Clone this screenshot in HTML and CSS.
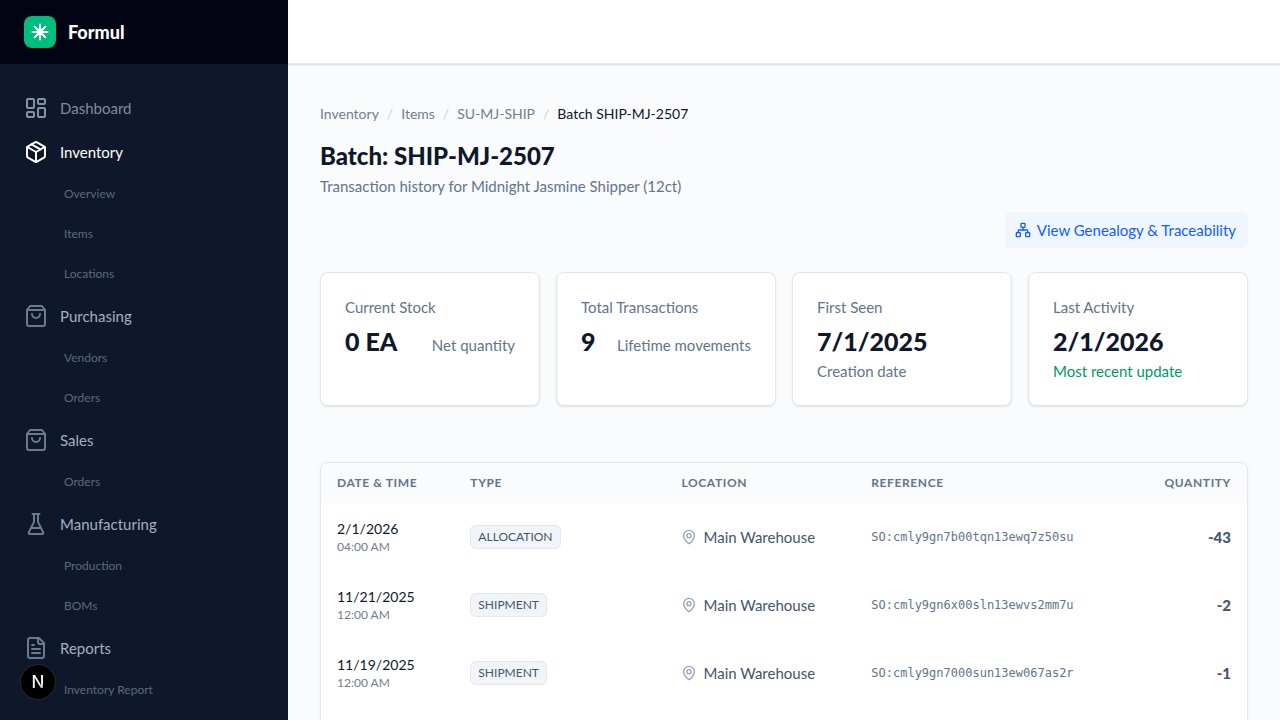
FILE: index.html
```html
<!DOCTYPE html>
<html lang="en">
<head>
    <meta charset="UTF-8">
    <meta name="viewport" content="width=device-width, initial-scale=1.0">
    <title>Batch SHIP-MJ-2507 - Formul</title>
    <link rel="stylesheet" href="styles.css">
</head>
<body>
    <!-- shared icons -->
    <svg class="sprite" aria-hidden="true">
        <symbol id="icon-bag" viewBox="0 0 24 24">
            <path d="M6 2 3 6v14a2 2 0 0 0 2 2h14a2 2 0 0 0 2-2V6l-3-4Z"/>
            <path d="M3 6h18"/>
            <path d="M16 10a4 4 0 0 1-8 0"/>
        </symbol>
        <symbol id="icon-pin" viewBox="0 0 24 24">
            <path d="M20 10c0 4.993-5.539 10.193-7.399 11.799a1 1 0 0 1-1.202 0C9.539 20.193 4 14.993 4 10a8 8 0 0 1 16 0"/>
            <circle cx="12" cy="10" r="3"/>
        </symbol>
    </svg>

    <div class="app">
        <aside class="sidebar">
            <div class="brand">
                <span class="brand-logo">
                    <svg viewBox="0 0 32 32">
                        <path d="M16 8.5v15M8.5 16h15M10.7 10.7l10.6 10.6M21.3 10.7L10.7 21.3"/>
                    </svg>
                </span>
                <span class="brand-name">Formul</span>
            </div>

            <nav class="nav">
                <a class="nav-item muted" href="#">
                    <svg class="icon" viewBox="0 0 24 24">
                        <rect width="7" height="9" x="3" y="3" rx="1"/>
                        <rect width="7" height="5" x="14" y="3" rx="1"/>
                        <rect width="7" height="9" x="14" y="12" rx="1"/>
                        <rect width="7" height="5" x="3" y="16" rx="1"/>
                    </svg>
                    Dashboard
                </a>

                <a class="nav-item active" href="#">
                    <svg class="icon" viewBox="0 0 24 24">
                        <path d="M11 21.73a2 2 0 0 0 2 0l7-4A2 2 0 0 0 21 16V8a2 2 0 0 0-1-1.73l-7-4a2 2 0 0 0-2 0l-7 4A2 2 0 0 0 3 8v8a2 2 0 0 0 1 1.73z"/>
                        <path d="M12 22V12"/>
                        <path d="m3.3 7 8.7 5 8.7-5"/>
                        <path d="m7.5 4.27 9 5.15"/>
                    </svg>
                    Inventory
                </a>
                <a class="nav-sub" href="#">Overview</a>
                <a class="nav-sub" href="#">Items</a>
                <a class="nav-sub" href="#">Locations</a>

                <a class="nav-item" href="#">
                    <svg class="icon"><use href="#icon-bag"/></svg>
                    Purchasing
                </a>
                <a class="nav-sub" href="#">Vendors</a>
                <a class="nav-sub" href="#">Orders</a>

                <a class="nav-item" href="#">
                    <svg class="icon"><use href="#icon-bag"/></svg>
                    Sales
                </a>
                <a class="nav-sub" href="#">Orders</a>

                <a class="nav-item" href="#">
                    <svg class="icon" viewBox="0 0 24 24">
                        <path d="M10 2v7.527a2 2 0 0 1-.211.896L4.72 20.55a1 1 0 0 0 .9 1.45h12.76a1 1 0 0 0 .9-1.45l-5.069-10.127A2 2 0 0 1 14 9.527V2"/>
                        <path d="M8.5 2h7"/>
                        <path d="M7 16h10"/>
                    </svg>
                    Manufacturing
                </a>
                <a class="nav-sub" href="#">Production</a>
                <a class="nav-sub" href="#">BOMs</a>

                <a class="nav-item" href="#">
                    <svg class="icon" viewBox="0 0 24 24">
                        <path d="M15 2H6a2 2 0 0 0-2 2v16a2 2 0 0 0 2 2h12a2 2 0 0 0 2-2V7Z"/>
                        <path d="M14 2v4a2 2 0 0 0 2 2h4"/>
                        <path d="M10 9H8"/>
                        <path d="M16 13H8"/>
                        <path d="M16 17H8"/>
                    </svg>
                    Reports
                </a>
                <a class="nav-sub" href="#">Inventory Report</a>
            </nav>
        </aside>

        <div class="page">
            <header class="topbar"></header>

            <main class="content">
                <nav class="breadcrumb" aria-label="Breadcrumb">
                    <a href="#">Inventory</a>
                    <span class="sep">/</span>
                    <a href="#">Items</a>
                    <span class="sep">/</span>
                    <a href="#">SU-MJ-SHIP</a>
                    <span class="sep">/</span>
                    <span class="current">Batch SHIP-MJ-2507</span>
                </nav>

                <h1>Batch: SHIP-MJ-2507</h1>
                <p class="subtitle">Transaction history for Midnight Jasmine Shipper (12ct)</p>

                <div class="actions">
                    <a class="trace-link" href="#">
                        <svg class="icon small" viewBox="0 0 24 24">
                            <rect x="16" y="16" width="6" height="6" rx="1"/>
                            <rect x="2" y="16" width="6" height="6" rx="1"/>
                            <rect x="9" y="2" width="6" height="6" rx="1"/>
                            <path d="M5 16v-3a1 1 0 0 1 1-1h12a1 1 0 0 1 1 1v3"/>
                            <path d="M12 12V8"/>
                        </svg>
                        View Genealogy &amp; Traceability
                    </a>
                </div>

                <section class="stats">
                    <div class="stat">
                        <div class="stat-label">Current Stock</div>
                        <div class="stat-body">
                            <span class="stat-value">0 EA</span>
                            <span class="stat-note">Net quantity</span>
                        </div>
                    </div>
                    <div class="stat">
                        <div class="stat-label">Total Transactions</div>
                        <div class="stat-body">
                            <span class="stat-value">9</span>
                            <span class="stat-note">Lifetime movements</span>
                        </div>
                    </div>
                    <div class="stat">
                        <div class="stat-label">First Seen</div>
                        <div class="stat-body">
                            <span class="stat-value">7/1/2025</span>
                            <span class="stat-note">Creation date</span>
                        </div>
                    </div>
                    <div class="stat">
                        <div class="stat-label">Last Activity</div>
                        <div class="stat-body">
                            <span class="stat-value">2/1/2026</span>
                            <span class="stat-note positive">Most recent update</span>
                        </div>
                    </div>
                </section>

                <section class="table-card">
                    <table>
                        <thead>
                            <tr>
                                <th class="col-date">Date &amp; Time</th>
                                <th class="col-type">Type</th>
                                <th class="col-location">Location</th>
                                <th>Reference</th>
                                <th class="col-qty">Quantity</th>
                            </tr>
                        </thead>
                        <tbody>
                            <tr>
                                <td><div class="date">2/1/2026</div><div class="time">04:00 AM</div></td>
                                <td><span class="badge">ALLOCATION</span></td>
                                <td><div class="location"><svg class="icon small"><use href="#icon-pin"/></svg>Main Warehouse</div></td>
                                <td class="reference">SO:cmly9gn7b00tqn13ewq7z50su</td>
                                <td class="quantity">-43</td>
                            </tr>
                            <tr>
                                <td><div class="date">11/21/2025</div><div class="time">12:00 AM</div></td>
                                <td><span class="badge">SHIPMENT</span></td>
                                <td><div class="location"><svg class="icon small"><use href="#icon-pin"/></svg>Main Warehouse</div></td>
                                <td class="reference">SO:cmly9gn6x00sln13ewvs2mm7u</td>
                                <td class="quantity">-2</td>
                            </tr>
                            <tr>
                                <td><div class="date">11/19/2025</div><div class="time">12:00 AM</div></td>
                                <td><span class="badge">SHIPMENT</span></td>
                                <td><div class="location"><svg class="icon small"><use href="#icon-pin"/></svg>Main Warehouse</div></td>
                                <td class="reference">SO:cmly9gn7000sun13ew067as2r</td>
                                <td class="quantity">-1</td>
                            </tr>
                        </tbody>
                    </table>
                </section>
            </main>
        </div>
    </div>

    <button class="dev-badge" type="button"><span>N</span></button>
</body>
</html>
```
FILE: styles.css
```css
* {
    box-sizing: border-box;
}

body {
    margin: 0;
    font-family: Lato, sans-serif;
    font-size: 15px;
    line-height: 20px;
    color: #0f172b;
    background-color: #f9fbfd;
}

a {
    color: inherit;
    text-decoration: none;
}

.sprite {
    display: none;
}

.icon {
    width: 24px;
    height: 24px;
    flex-shrink: 0;
    fill: none;
    stroke: currentColor;
    stroke-width: 2;
    stroke-linecap: round;
    stroke-linejoin: round;
}

.icon.small {
    width: 16px;
    height: 16px;
}

.app {
    display: flex;
    height: 100vh;
}

/* Sidebar */
.sidebar {
    width: 288px;
    flex-shrink: 0;
    overflow: hidden;
    background-color: #0f172a;
}

.brand {
    display: flex;
    align-items: center;
    gap: 12px;
    height: 64px;
    padding: 0 24px;
    background-color: #020414;
}

.brand-logo {
    width: 32px;
    height: 32px;
    border-radius: 8px;
    background-color: #00bc7d;
}

.brand-logo svg {
    display: block;
    fill: none;
    stroke: #fff;
    stroke-width: 2;
    stroke-linecap: round;
}

.brand-name {
    font-size: 18px;
    font-weight: 900;
    color: #fff;
}

.nav {
    padding: 22px 24px;
}

.nav-item {
    display: flex;
    align-items: center;
    gap: 12px;
    height: 44px;
    color: #a3b0c2;
}

.nav-item .icon {
    color: #6b7a90;
}

.nav-item.muted {
    color: #7f8da2;
}

.nav-item.muted .icon {
    color: #8493a8;
}

.nav-item.active,
.nav-item.active .icon {
    color: #fff;
}

.nav-sub {
    display: flex;
    align-items: center;
    height: 40px;
    padding-left: 40px;
    font-size: 12px;
    color: #5b6a81;
}

/* Main area */
.page {
    flex: 1;
    min-width: 0;
    overflow: hidden;
}

.topbar {
    height: 64px;
    border-bottom: 1px solid #e6e8eb;
    background-color: #fff;
    box-shadow: 0 1px 2px rgba(0, 0, 0, 0.15);
}

.content {
    padding: 40px 32px;
}

.breadcrumb {
    display: flex;
    gap: 8px;
    margin-bottom: 16px;
    font-size: 14px;
    color: #717d92;
}

.breadcrumb .sep {
    color: #cad5e2;
}

.breadcrumb .current {
    color: #0f172b;
}

h1 {
    margin: 0 0 4px;
    font-size: 24px;
    line-height: 32px;
    font-weight: 900;
}

.subtitle {
    margin: 0 0 16px;
    color: #62748e;
}

.actions {
    display: flex;
    justify-content: flex-end;
    margin-bottom: 24px;
}

.trace-link {
    display: flex;
    align-items: center;
    gap: 6px;
    padding: 8px 12px 8px 10px;
    border-radius: 6px;
    background-color: #eff6ff;
    color: #155dfc;
}

.stats {
    display: grid;
    grid-template-columns: repeat(4, 1fr);
    gap: 16px;
    margin-bottom: 56px;
}

.stat {
    padding: 24px;
    border: 1px solid #e2e6ec;
    border-radius: 8px;
    background-color: #fff;
    box-shadow: 0 1px 2px rgba(0, 0, 0, 0.1);
    color: #62748e;
}

.stat-label {
    margin-bottom: 8px;
}

.stat-body {
    display: flex;
    flex-wrap: wrap;
    align-items: baseline;
    justify-content: space-between;
    row-gap: 4px;
}

.stat-value {
    font-size: 25px;
    line-height: 32px;
    font-weight: 900;
    color: #0f172b;
}

.stat-note.positive {
    color: #009966;
}

/* Transactions table */
.table-card {
    padding-bottom: 32px;
    border: 1px solid #e2e6ec;
    border-radius: 8px;
    overflow: hidden;
    background-color: #fff;
    box-shadow: 0 1px 2px rgba(0, 0, 0, 0.1);
}

table {
    width: 100%;
    table-layout: fixed;
    border-collapse: collapse;
}

th {
    height: 40px;
    padding: 0 16px;
    background-color: #f9fbfd;
    font-size: 12px;
    font-weight: 700;
    letter-spacing: 0.05em;
    text-align: left;
    text-transform: uppercase;
    color: #62748e;
}

td {
    height: 68px;
    padding: 0 16px;
}

.col-date {
    width: 14.4%;
}

.col-type {
    width: 22.8%;
}

.col-location {
    width: 20.5%;
}

.col-qty {
    text-align: right;
}

.date {
    font-size: 14px;
}

.time {
    font-size: 12px;
    line-height: 16px;
    color: #717d92;
}

.badge {
    display: inline-block;
    padding: 2px 7px;
    border: 1px solid #e2e8f0;
    border-radius: 6px;
    background-color: #f1f5f9;
    font-size: 12px;
    line-height: 18px;
    color: #45556c;
}

.location {
    display: flex;
    align-items: center;
    gap: 6px;
    color: #45556c;
}

.location .icon {
    color: #90a1b9;
}

.reference {
    font-family: "DejaVu Sans Mono", monospace;
    font-size: 12px;
    color: #62748e;
}

.quantity {
    font-weight: 900;
    text-align: right;
    color: #45556c;
}

/* Floating dev button */
.dev-badge {
    position: fixed;
    left: 20px;
    bottom: 20px;
    width: 36px;
    height: 36px;
    padding: 0;
    border: 1px solid #2a2a2a;
    border-radius: 50%;
    background-color: #000;
    font-family: Inter, sans-serif;
    font-size: 17px;
    font-weight: 500;
    cursor: pointer;
}

.dev-badge span {
    color: transparent;
    background: linear-gradient(160deg, #fff 60%, #555);
    background-clip: text;
}
```
